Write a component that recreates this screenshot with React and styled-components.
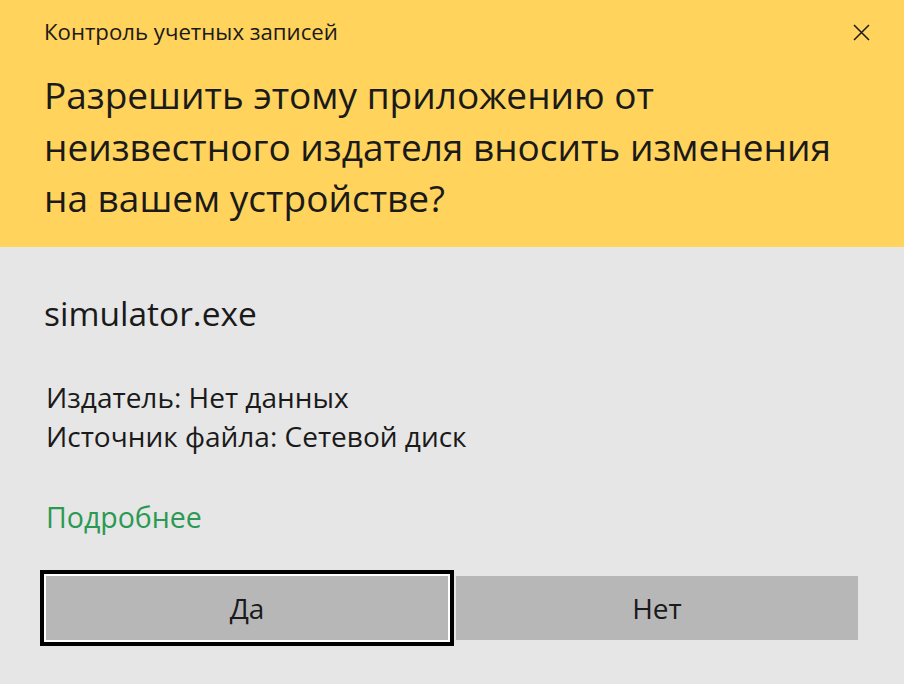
import React from 'react';
import styled, { createGlobalStyle } from 'styled-components';

const GlobalStyle = createGlobalStyle`
  html, body {
    margin: 0;
    padding: 0;
    background: #E6E6E6;
  }
  body {
    font-family: 'Open Sans', 'Noto Sans', sans-serif;
  }
`;

// Диалог контроля учетных записей
function App() {
  return (
    <>
      <GlobalStyle />
      <Window>
        <Header>
          <TitleRow>
            <Caption>Контроль учетных записей</Caption>
            <CloseButton aria-label="Закрыть">
              <svg width="17" height="17" viewBox="0 0 17 17">
                <path d="M1 1 L16 16 M16 1 L1 16" stroke="#1a1a1a" strokeWidth="1.5" fill="none" />
              </svg>
            </CloseButton>
          </TitleRow>
          <Question>
            Разрешить этому приложению от<br />
            неизвестного издателя вносить изменения<br />
            на вашем устройстве?
          </Question>
        </Header>
        <Body>
          <FileName>simulator.exe</FileName>
          <Details>
            <DetailLine>Издатель: Нет данных</DetailLine>
            <DetailLine>Источник файла: Сетевой диск</DetailLine>
          </Details>
          <MoreLink>Подробнее</MoreLink>
          <Buttons>
            <Button focused>Да</Button>
            <Button>Нет</Button>
          </Buttons>
        </Body>
      </Window>
    </>
  );
}

export default App;

const Window = styled.div`
  width: 904px;
  height: 684px;
  display: flex;
  flex-direction: column;
  background: #E6E6E6;
  overflow: hidden;
`;

const Header = styled.div`
  background: #FFD35C;
  padding: 17px 34px 0 44px;
  height: 247px;
  box-sizing: border-box;
  display: flex;
  flex-direction: column;
`;

const TitleRow = styled.div`
  display: flex;
  justify-content: space-between;
  align-items: center;
  height: 30px;
`;

const Caption = styled.div`
  color: #1a1a1a;
  font-size: 22.2px;
  line-height: 30px;
  white-space: nowrap;
`;

const CloseButton = styled.div`
  width: 17px;
  height: 17px;
  display: flex;
`;

const Question = styled.div`
  margin-top: 22px;
  color: #1a1a1a;
  font-size: 37px;
  line-height: 51.5px;
  white-space: nowrap;
`;

const Body = styled.div`
  flex: 1;
  display: flex;
  flex-direction: column;
  padding: 46px 46px 0 46px;
`;

const FileName = styled.div`
  margin-left: -2px;
  color: #1a1a1a;
  font-size: 33.5px;
  line-height: 40px;
`;

const Details = styled.div`
  margin-top: 45px;
  display: flex;
  flex-direction: column;
`;

const DetailLine = styled.div`
  color: #1a1a1a;
  font-size: 28px;
  line-height: 39px;
  white-space: nowrap;
`;

const MoreLink = styled.div`
  margin-top: 42px;
  color: #2A9A52;
  font-size: 28.5px;
  line-height: 39px;
  cursor: pointer;
`;

const Buttons = styled.div`
  margin-top: 39px;
  display: flex;
  gap: 8px;
`;

const Button = styled.button`
  width: 402px;
  height: 64px;
  border: none;
  padding: 0;
  background: #B7B7B7;
  color: #1a1a1a;
  font-family: 'Open Sans', 'Noto Sans', sans-serif;
  font-size: 28px;
  cursor: pointer;
  box-shadow: ${(props) => (props.focused ? '0 0 0 2px #FFFFFF, 0 0 0 6px #000000' : 'none')};
`;
